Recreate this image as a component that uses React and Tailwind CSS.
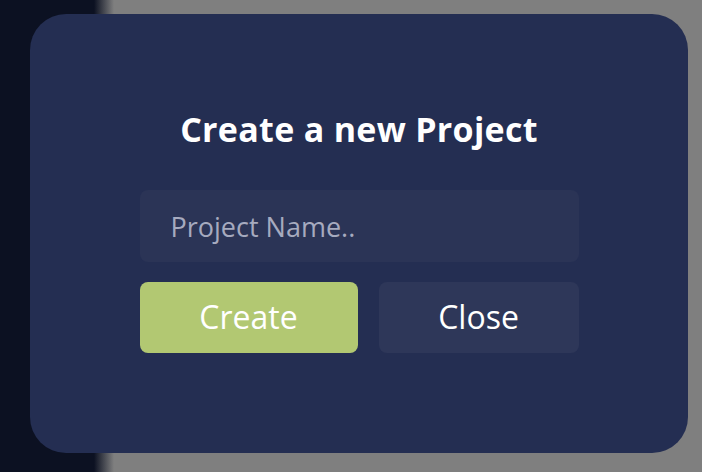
import React from 'react';

const App = () => {
    return (
        <div className="w-[702px] h-[472px] overflow-hidden bg-[linear-gradient(to_right,#0c1122_94px,#7f7f7f_114px)] pt-[14px] pl-[30px]" style={{ fontFamily: '"Open Sans", Lato, sans-serif' }}>
            {/* Modal */}
            <div className="w-[658px] h-[439px] rounded-[36px] bg-[#242e52] flex flex-col items-center pt-[95px]">
                <h2 className="text-[34px] leading-[40px] font-bold tracking-[0.3px] text-white">Create a new Project</h2>
                <div className="mt-[41px] w-[439px]">
                    <input
                        type="text"
                        placeholder="Project Name.."
                        className="w-full h-[72px] rounded-lg bg-[#2b3456] px-[31px] text-[27px] text-white placeholder-[#a6aabf] focus:outline-none"
                    />
                    <div className="mt-[20px] flex gap-[21px]">
                        <button className="w-[218px] h-[71px] pb-[1px] rounded-lg bg-[#b2c872] text-white text-[32px]">Create</button>
                        <button className="w-[200px] h-[71px] pb-[1px] rounded-lg bg-[#2e3759] text-white text-[32px]">Close</button>
                    </div>
                </div>
            </div>
        </div>
    );
};

export default App;
